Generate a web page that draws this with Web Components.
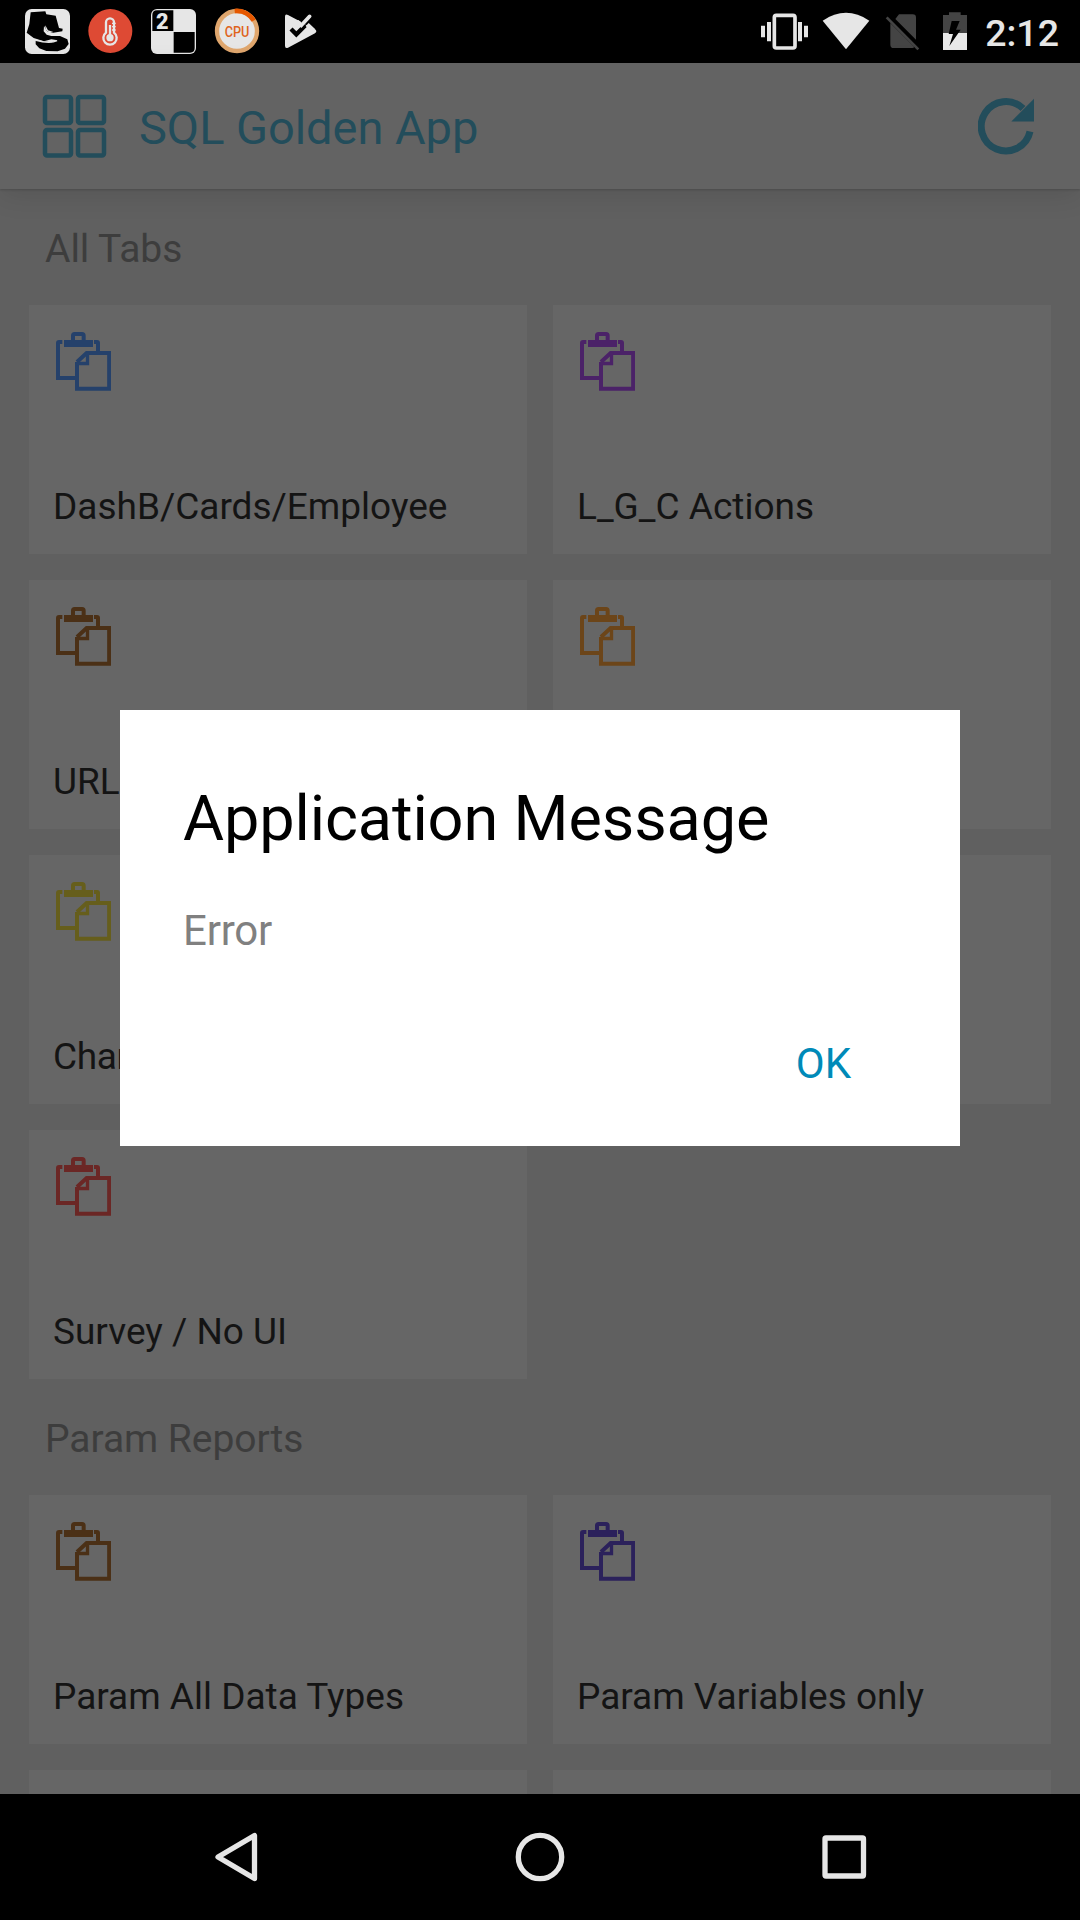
<!DOCTYPE html>
<html lang="en">
<head>
<meta charset="utf-8">
<title>SQL Golden App</title>
<style>
html,body{margin:0;width:1080px;height:1920px;overflow:hidden;background:#606060}
body{font-family:Roboto,sans-serif}
</style>
</head>
<body>
<golden-app></golden-app>
<script>
const define=(name,css,html)=>customElements.define(name,class extends HTMLElement{
  constructor(){super();this.attachShadow({mode:'open'}).innerHTML=`<style>:host{box-sizing:border-box}svg{display:block;flex:none}${css}</style>${typeof html==='function'?html(this):html}`}
});

define('status-bar',`
:host{display:flex;height:63px;background:#000;align-items:flex-start;justify-content:space-between}
.clock{font-size:37.5px;font-weight:480;line-height:63px;color:#e6e6e6;margin:2px 21px 0 0;width:79px;text-align:right;white-space:nowrap}
.end{display:flex}
`,`
<svg width="340" height="63" viewBox="0 0 1020 189">
 <rect x="75" y="27" width="135" height="135" rx="20" fill="#e6e6e6"/>
 <path d="M92 37L136 34L139 43L167 47L177 84L188 86L187 94L160 98L141 94L132 78L131 94L140 104L154 108L180 108L202 118L206 132L195 146L173 154L139 153L118 145L107 133V120L125 124L155 127L173 121L154 118L132 124L101 114L80 98L88 72Z" fill="#000"/>
 <path d="M136 76Q134 92 146 96H160L144 91Z" fill="#e6e6e6"/>
 <path d="M105 120Q150 133 171 122" fill="none" stroke="#e6e6e6" stroke-width="4"/>
 <circle cx="331" cy="93" r="66" fill="#de4a34"/>
 <path d="M318 98V67A12 12 0 0 1 342 67V98A20 20 0 1 1 318 98Z" fill="none" stroke="#e6e6e6" stroke-width="7"/>
 <path d="M330 75V110" stroke="#e6e6e6" stroke-width="7"/><circle cx="330" cy="113" r="11" fill="#e6e6e6"/>
 <path d="M336 70H347M336 80H347M336 90H347" stroke="#e6e6e6" stroke-width="4"/>
 <rect x="453" y="27" width="135" height="135" rx="18" fill="#e6e6e6"/>
 <path d="M520 31H471Q457 31 457 45V93H520ZM521 96H584V144Q584 158 570 158H521Z" fill="#000"/>
 <text x="468" y="86" font-family="Roboto" font-weight="900" font-size="65" fill="#e6e6e6">2</text>
 <circle cx="711" cy="93" r="60" fill="#e6e6e6" stroke="#dfa66d" stroke-width="13"/>
 <path d="M704 33A60 60 0 0 1 761 62" fill="none" stroke="#e65800" stroke-width="14"/>
 <text x="711" y="110" text-anchor="middle" textLength="74" lengthAdjust="spacingAndGlyphs" font-family="Roboto" font-weight="500" font-size="44" fill="#df641c">CPU</text>
 <path d="M855 50Q855 40 864 45L945 88Q953 94 945 100L864 143Q855 147 855 137Z" fill="#e6e6e6"/>
 <path d="M902 69L926 40L955 62L930 79Z" fill="#000"/>
 <path d="M873 87L889 103L917 75" fill="none" stroke="#000" stroke-width="13"/>
 <path d="M917 78L926 69L946 88L930 92Z" fill="#e6e6e6"/>
 <path d="M894 66L904 76L929 49" fill="none" stroke="#e6e6e6" stroke-width="11" stroke-linecap="round"/>
</svg>
<div class="end">
<svg width="240" height="63" viewBox="0 0 720 189" fill="#e6e6e6">
 <rect x="103" y="46" width="62" height="98" rx="6" fill="none" stroke="#e6e6e6" stroke-width="11"/>
 <path d="M63 77h12v35H63zM81 66h12v58H81zM174 66h12v58h-12zM192 77h12v35h-12z"/>
 <path d="M248 62Q318 15 388 62L318 148Z"/>
 <path d="M477 43H518Q528 43 528 53V119L466 57ZM451 69L523 141Q521 144 517 144H461Q451 144 451 134Z" fill="#444"/>
 <path d="M440 52L535 148" stroke="#444" stroke-width="8"/>
 <path d="M609 45H627V37H662V45H681V100H609Z" fill="#444"/><path d="M609 99H681V150H609Z" fill="#e9e9e9"/>
 <path d="M635 63H659L648 89H662L628 138L639 102H626Z" fill="#000"/>
</svg>
<span class="clock">2:12</span></div>`);

define('app-bar',`
:host{display:flex;height:126px;align-items:center;background:#636363;color:#234d5b;box-shadow:0 1px 2px rgba(0,0,0,.16),0 6px 26px rgba(0,0,0,.11);position:relative;padding:0 46px 0 42px}
.title{flex:1;font-size:47px;line-height:60px;margin:4px 0 0 32px;letter-spacing:-.05px}
`,`
<svg width="65" height="64" viewBox="0 0 65 64" fill="none" stroke="#234d5b" stroke-width="4.5"><rect x="3" y="3" width="26" height="26" rx="2"/><rect x="36" y="3" width="26" height="26" rx="2"/><rect x="3" y="36" width="26" height="25.500" rx="2"/><rect x="36" y="36" width="26" height="25.500" rx="2"/></svg>
<span class="title"><slot></slot></span>
<svg width="56" height="57" viewBox="114 113 168 170"><path d="M249 144A74 74 0 1 0 270 213" fill="none" stroke="#234d5b" stroke-width="21"/><path d="M282 115V183H214Z" fill="#234d5b"/></svg>`);

define('clip-icon',`:host{display:block;width:55px;height:59px}`,`
<svg width="55" height="59" viewBox="108 111 165 177" fill="none" stroke="currentColor">
 <path d="M127 141H117Q114 141 114 144V249H165" stroke-width="12"/>
 <path d="M222 141H231Q234 141 234 144V168" stroke-width="12"/>
 <path d="M132 135H219V156H132Z" fill="currentColor" stroke="none"/>
 <path d="M159 135V122Q159 117 164 117H186Q191 117 191 122V135" stroke-width="12"/>
 <path d="M171 201L200 174H267.500V281.500H171V201" stroke-width="12"/>
 <path d="M170 205.500H202.500V172" stroke-width="10"/>
</svg>`);

define('tab-card',`
:host{display:flex;flex-direction:column;justify-content:space-between;height:249px;background:#666;padding:27px 24px 25px 27px}
.label{font-size:37px;line-height:44px;color:#141414;margin-left:-3px;white-space:nowrap}
clip-icon{color:var(--tint)}
`,`<clip-icon></clip-icon><span class="label"><slot></slot></span>`);

define('tab-section',`
:host{display:block;padding:0 29px}
.head{height:116px;box-sizing:border-box;padding:37px 0 0 16px;font-size:39px;line-height:46px;color:#3d3d3d;letter-spacing:-.05px}
.grid{display:grid;grid-template-columns:498px 498px;gap:26px}
`,el=>`<div class="head">${el.getAttribute('heading')}</div><div class="grid"><slot></slot></div>`);

define('message-dialog',`
:host{display:flex;flex-direction:column;background:#fff;width:840px;height:436px;padding:72px 109px 0 63px}
.t{font-size:63px;line-height:74px;color:#000;white-space:nowrap;letter-spacing:-.12px}
.m{font-size:42px;line-height:50px;color:#808080;margin-top:50px;letter-spacing:-.2px}
.ok{font-size:42px;line-height:50px;color:#008ab8;align-self:flex-end;margin-top:83px}
`,`<span class="t"><slot name="title"></slot></span><span class="m"><slot></slot></span><span class="ok"><slot name="action"></slot></span>`);

define('nav-bar',`:host{display:flex;height:126px;background:#000;align-items:center;justify-content:center}`,`
<svg width="720" height="126" viewBox="0 0 720 126" fill="none" stroke="#e6e6e6" stroke-width="5.300" stroke-linejoin="round">
<path d="M74.500 41.500V84.500L38 63Z"/><circle cx="360" cy="63" r="21.700"/><rect x="645" y="44" width="38.500" height="38" rx="1"/></svg>`);

define('golden-app',`
:host{display:flex;flex-direction:column;width:1080px;height:1920px;position:relative;overflow:hidden;background:#606060}
main{flex:1;min-height:0;overflow:hidden}
message-dialog{position:absolute;left:120px;top:710px}
`,`
<status-bar></status-bar>
<app-bar>SQL Golden App</app-bar>
<main>
<tab-section heading="All Tabs">
<tab-card style="--tint:#25416b">DashB/Cards/Employee</tab-card>
<tab-card style="--tint:#4b2268">L_G_C Actions</tab-card>
<tab-card style="--tint:#4b3016">URL</tab-card>
<tab-card style="--tint:#6c4519"></tab-card>
<tab-card style="--tint:#665e1c;letter-spacing:-.4px">Charts</tab-card>
<tab-card style="--tint:#666"></tab-card>
<tab-card style="--tint:#6b2725">Survey / No UI</tab-card>
</tab-section>
<tab-section heading="Param Reports">
<tab-card style="--tint:#4b3016">Param All Data Types</tab-card>
<tab-card style="--tint:#2b215b">Param Variables only</tab-card>
<tab-card style="--tint:#666"></tab-card>
<tab-card style="--tint:#666"></tab-card>
</tab-section>
</main>
<nav-bar></nav-bar>
<message-dialog><span slot="title">Application Message</span>Error<span slot="action">OK</span></message-dialog>`);
</script>
</body>
</html>
